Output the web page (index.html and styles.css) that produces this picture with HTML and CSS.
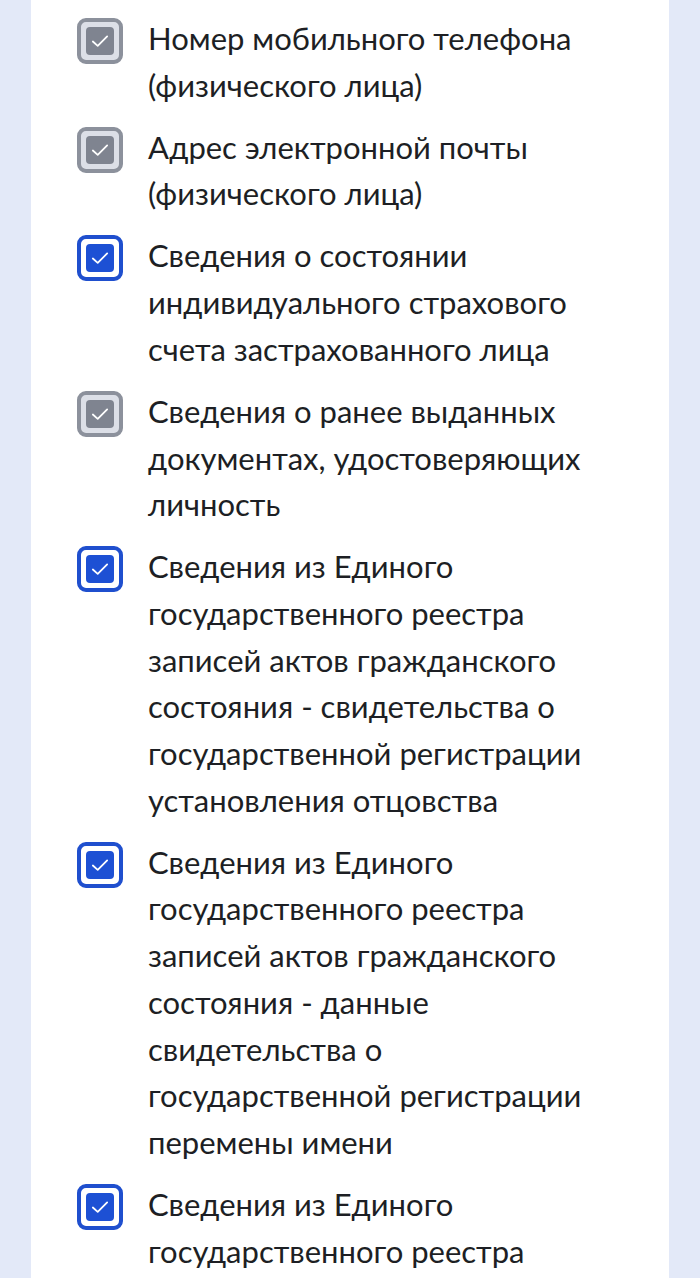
FILE: index.html
```html
<!DOCTYPE html>
<html lang="ru">
<head>
<meta charset="utf-8">
<link rel="stylesheet" href="styles.css">
</head>
<body>
<div class="page">
  <div class="card">
    <ul class="list">
      <li class="item">
        <span class="cb cb-disabled"><span class="cb-inner"><svg viewBox="0 0 16 16"><path d="M3.6 8.3 L6.6 11 L12.4 5.2"/></svg></span></span>
        <span class="label">Номер мобильного телефона (физического лица)</span>
      </li>
      <li class="item">
        <span class="cb cb-disabled"><span class="cb-inner"><svg viewBox="0 0 16 16"><path d="M3.6 8.3 L6.6 11 L12.4 5.2"/></svg></span></span>
        <span class="label">Адрес электронной почты (физического лица)</span>
      </li>
      <li class="item">
        <span class="cb cb-checked"><span class="cb-inner"><svg viewBox="0 0 16 16"><path d="M3.6 8.3 L6.6 11 L12.4 5.2"/></svg></span></span>
        <span class="label">Сведения о состоянии индивидуального страхового счета застрахованного лица</span>
      </li>
      <li class="item">
        <span class="cb cb-disabled"><span class="cb-inner"><svg viewBox="0 0 16 16"><path d="M3.6 8.3 L6.6 11 L12.4 5.2"/></svg></span></span>
        <span class="label">Сведения о ранее выданных документах, удостоверяющих личность</span>
      </li>
      <li class="item">
        <span class="cb cb-checked"><span class="cb-inner"><svg viewBox="0 0 16 16"><path d="M3.6 8.3 L6.6 11 L12.4 5.2"/></svg></span></span>
        <span class="label">Сведения из Единого государственного реестра записей актов гражданского состояния - свидетельства о государственной регистрации установления отцовства</span>
      </li>
      <li class="item">
        <span class="cb cb-checked"><span class="cb-inner"><svg viewBox="0 0 16 16"><path d="M3.6 8.3 L6.6 11 L12.4 5.2"/></svg></span></span>
        <span class="label">Сведения из Единого государственного реестра записей актов гражданского состояния - данные свидетельства о государственной регистрации перемены имени</span>
      </li>
      <li class="item">
        <span class="cb cb-checked"><span class="cb-inner"><svg viewBox="0 0 16 16"><path d="M3.6 8.3 L6.6 11 L12.4 5.2"/></svg></span></span>
        <span class="label">Сведения из Единого государственного реестра</span>
      </li>
    </ul>
  </div>
</div>
</body>
</html>
```

FILE: styles.css
```css
html, body {
  margin: 0;
  padding: 0;
  background: #e3e9f8;
  height: 100%;
  overflow: hidden;
}

.page {
  padding: 0 31px;
  height: 100%;
}

.card {
  background: #ffffff;
  min-height: 100%;
  padding: 15px 69px 0 46px;
  box-sizing: border-box;
}

.list {
  list-style: none;
  margin: 0;
  padding: 0;
  display: flex;
  flex-direction: column;
  gap: 15.3px;
}

.item {
  display: flex;
  align-items: flex-start;
  gap: 25px;
}

.label {
  font-family: Lato, "Noto Sans", sans-serif;
  font-size: 31px;
  line-height: 46.7px;
  color: #1d1f24;
  flex: 1;
}

.cb {
  flex: none;
  width: 46px;
  height: 46px;
  margin-top: 3px;
  box-sizing: border-box;
  border: 4px solid;
  border-radius: 9px;
  display: flex;
  align-items: center;
  justify-content: center;
}

.cb-inner {
  width: 28px;
  height: 28px;
  border-radius: 4px;
  display: flex;
  align-items: center;
  justify-content: center;
}

.cb-inner svg {
  width: 26px;
  height: 26px;
  fill: none;
  stroke: #ffffff;
  stroke-width: 1.1;
  stroke-linecap: round;
  stroke-linejoin: round;
}

.cb-disabled {
  border-color: #8c919c;
  background: #dcdfe7;
}

.cb-disabled .cb-inner {
  background: #7f8490;
}

.cb-checked {
  border-color: #1f4fce;
  background: #ffffff;
}

.cb-checked .cb-inner {
  background: #1d50d4;
}
```
